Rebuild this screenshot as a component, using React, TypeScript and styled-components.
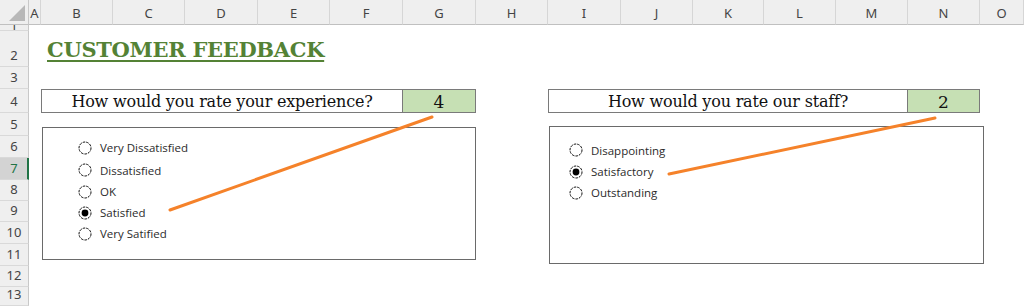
import { createGlobalStyle } from "styled-components";
import styled from "styled-components";

const GlobalStyle = createGlobalStyle`
    html, body {
        margin: 0;
        padding: 0;
        background: #fff;
        overflow: hidden;
    }
`;

const colWidths = [29, 12, 72, 72, 73, 72, 73, 73, 72, 73, 72, 71, 72, 72, 72, 44];
const rowHeights = [25, 6, 36, 22, 24, 23, 22, 22, 21, 21, 22, 22, 21, 19];
const letters = "ABCDEFGHIJKLMNO".split("");

const Sheet = styled.div`
    position: relative;
    width: 1024px;
    height: 306px;
    display: grid;
    grid-template-columns: ${colWidths.map((w) => w + "px").join(" ")};
    grid-template-rows: ${rowHeights.map((h) => h + "px").join(" ")};
    overflow: hidden;
    background: #fff;
`;

const Corner = styled.div`
    grid-column: 1;
    grid-row: 1;
    background: #efefef;
    border-right: 1px solid #c8c8c8;
    border-bottom: 1px solid #c0c0c0;
    box-sizing: border-box;
    position: relative;
    &::after {
        content: "";
        position: absolute;
        right: 3px;
        bottom: 3px;
        width: 0;
        height: 0;
        border-left: 16px solid transparent;
        border-bottom: 16px solid #b8b8b8;
    }
`;

const ColHeader = styled.div<{ $col: number }>`
    grid-column: ${(p) => p.$col};
    grid-row: 1;
    background: #efefef;
    border-right: 1px solid #d6d6d6;
    border-bottom: 1px solid #c0c0c0;
    box-sizing: border-box;
    display: flex;
    align-items: center;
    justify-content: center;
    font-family: "Noto Sans", "Open Sans", sans-serif;
    font-size: 13px;
    color: #444;
    padding-top: 1px;
`;

// row 1 is scrolled almost out of view, so only the foot of its label shows
const RowHeader = styled.div<{ $row: number; $active?: boolean }>`
    grid-column: 1;
    grid-row: ${(p) => p.$row};
    background: ${(p) => (p.$active ? "#d3d3d3" : "#efefef")};
    border-right: ${(p) => (p.$active ? "2px solid #217346" : "1px solid #c8c8c8")};
    border-bottom: 1px solid #d9d9d9;
    box-sizing: border-box;
    display: flex;
    align-items: flex-end;
    justify-content: center;
    overflow: hidden;
    font-family: "Noto Sans", "Open Sans", sans-serif;
    font-size: 13px;
    line-height: ${(p) => (p.$row === 2 ? 10 : 13)}px;
    color: ${(p) => (p.$active ? "#217346" : "#444")};
    padding-bottom: ${(p) => (p.$row === 2 ? 0 : 4)}px;
    padding-left: ${(p) => (p.$active ? 1 : 0)}px;
`;

const Title = styled.div`
    grid-column: 3 / 9;
    grid-row: 3;
    display: flex;
    align-items: flex-end;
    padding: 0 0 5px 6px;
    font-family: "DejaVu Serif", serif;
    font-weight: bold;
    font-size: 21px;
    letter-spacing: -0.3px;
    color: #548235;
    text-decoration: underline;
    text-decoration-thickness: 2px;
    text-underline-offset: 3px;
    white-space: nowrap;
`;

const QuestionCell = styled.div<{ $from: number; $to: number }>`
    grid-column: ${(p) => p.$from} / ${(p) => p.$to};
    grid-row: 5;
    border: 1px solid #7a7a7a;
    box-sizing: border-box;
    display: flex;
    align-items: center;
    justify-content: center;
    font-family: "DejaVu Serif", serif;
    font-size: 16px;
    letter-spacing: -0.2px;
    color: #111;
    white-space: nowrap;
    padding-top: 1px;
`;

const AnswerCell = styled.div<{ $col: number }>`
    grid-column: ${(p) => p.$col};
    grid-row: 5;
    background: #c6e0b4;
    border: 1px solid #7a7a7a;
    border-left: none;
    box-sizing: border-box;
    display: flex;
    align-items: center;
    justify-content: center;
    font-family: "DejaVu Serif", serif;
    font-size: 17px;
    color: #111;
    padding-top: 2px;
`;

const GroupBox = styled.div<{ $from: number; $to: number; $top: number; $height: number; $right: number; $pad: number }>`
    grid-column: ${(p) => p.$from} / ${(p) => p.$to};
    grid-row: 6 / 14;
    align-self: start;
    margin-top: ${(p) => p.$top}px;
    margin-left: 1px;
    margin-right: ${(p) => p.$right}px;
    height: ${(p) => p.$height}px;
    border: 1px solid #6a6a6a;
    box-sizing: border-box;
    background: #fff;
    display: flex;
    flex-direction: column;
    padding-left: ${(p) => p.$pad}px;
`;

const Spacer = styled.div<{ $h: number }>`
    height: ${(p) => p.$h}px;
    flex-shrink: 0;
`;

const Option = styled.div<{ $h: number }>`
    height: ${(p) => p.$h}px;
    display: flex;
    align-items: center;
    gap: 8px;
    font-family: "Open Sans", "Noto Sans", sans-serif;
    font-size: 11.5px;
    color: #2b2b2b;
    white-space: nowrap;
`;

const Overlay = styled.svg`
    position: absolute;
    left: 0;
    top: 0;
    pointer-events: none;
`;

function Radio({ checked }: { checked?: boolean }) {
    return (
        <svg width="14" height="14" viewBox="0 0 14 14">
            <circle cx="7" cy="7" r="6" fill="#fff" stroke="#111" strokeWidth="1" strokeDasharray="2.6 1" />
            {checked && <circle cx="7" cy="7" r="3.4" fill="#000" />}
        </svg>
    );
}

type Item = { label: string; h: number; checked?: boolean };

const experience: Item[] = [
    { label: "Very Dissatisfied", h: 23 },
    { label: "Dissatisfied", h: 22 },
    { label: "OK", h: 21 },
    { label: "Satisfied", h: 21, checked: true },
    { label: "Very Satified", h: 21 },
];

const staff: Item[] = [
    { label: "Disappointing", h: 22 },
    { label: "Satisfactory", h: 21, checked: true },
    { label: "Outstanding", h: 21 },
];

function App() {
    return (
        <>
            <GlobalStyle />
            <Sheet>
                <Corner />
                {letters.map((l, i) => (
                    <ColHeader key={l} $col={i + 2}>
                        {l}
                    </ColHeader>
                ))}
                {rowHeights.slice(1).map((_, i) => (
                    <RowHeader key={i} $row={i + 2} $active={i + 1 === 7}>
                        {i + 1}
                    </RowHeader>
                ))}

                <Title>CUSTOMER FEEDBACK</Title>

                <QuestionCell $from={3} $to={8}>How would you rate your experience?</QuestionCell>
                <AnswerCell $col={8}>4</AnswerCell>

                <QuestionCell $from={10} $to={15}>How would you rate our staff?</QuestionCell>
                <AnswerCell $col={15}>2</AnswerCell>

                <GroupBox $from={3} $to={9} $top={14} $height={133} $right={0} $pad={35}>
                    <Spacer $h={8} />
                    {experience.map((o) => (
                        <Option key={o.label} $h={o.h}>
                            <Radio checked={o.checked} />
                            {o.label}
                        </Option>
                    ))}
                </GroupBox>

                <GroupBox $from={10} $to={16} $top={13} $height={138} $right={-4} $pad={19}>
                    <Spacer $h={12} />
                    {staff.map((o) => (
                        <Option key={o.label} $h={o.h}>
                            <Radio checked={o.checked} />
                            {o.label}
                        </Option>
                    ))}
                </GroupBox>

                <Overlay width="1024" height="306">
                    <line x1="170" y1="210" x2="432" y2="117" stroke="#f5822a" strokeWidth="3" strokeLinecap="round" />
                    <line x1="669" y1="174" x2="935" y2="118" stroke="#f5822a" strokeWidth="3" strokeLinecap="round" />
                </Overlay>
            </Sheet>
        </>
    );
}

export default App;
